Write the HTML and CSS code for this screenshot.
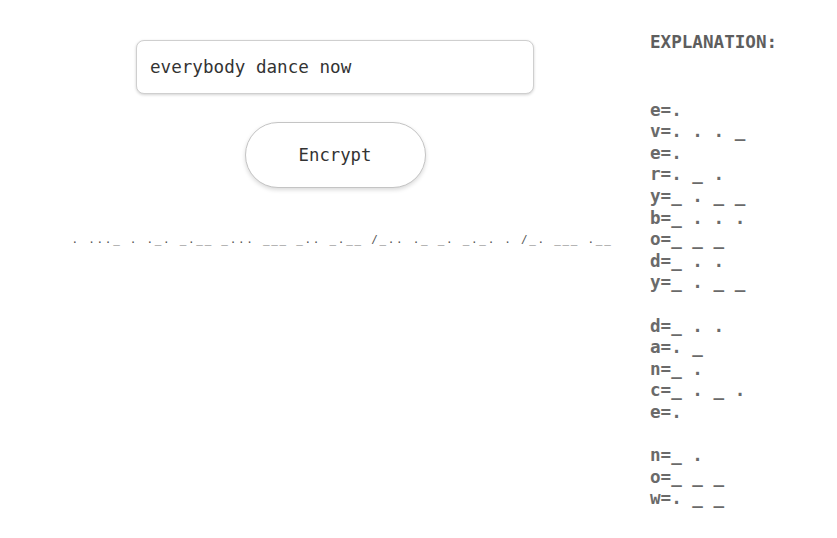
FILE: index.html
```html
<!DOCTYPE html>
<html lang="en">
<head>
<meta charset="utf-8">
<title>Morse Encrypt</title>
<link rel="stylesheet" href="styles.css">
</head>
<body>
<div class="page">
  <main class="main">
    <input class="text-input" type="text" value="everybody dance now">
    <button class="encrypt">Encrypt</button>
    <p class="morse">. ..._ . ._. _.__ _... ___ _.. _.__ /_.. ._ _. _._. . /_. ___ .__</p>
  </main>
  <aside class="explain">
    <h2 class="explain-title">EXPLANATION:</h2>
    <div class="word">
      <div class="row">e=.</div>
      <div class="row">v=. . . _</div>
      <div class="row">e=.</div>
      <div class="row">r=. _ .</div>
      <div class="row">y=_ . _ _</div>
      <div class="row">b=_ . . .</div>
      <div class="row">o=_ _ _</div>
      <div class="row">d=_ . .</div>
      <div class="row">y=_ . _ _</div>
    </div>
    <div class="word">
      <div class="row">d=_ . .</div>
      <div class="row">a=. _</div>
      <div class="row">n=_ .</div>
      <div class="row">c=_ . _ .</div>
      <div class="row">e=.</div>
    </div>
    <div class="word">
      <div class="row">n=_ .</div>
      <div class="row">o=_ _ _</div>
      <div class="row">w=. _ _</div>
    </div>
  </aside>
</div>
</body>
</html>
```

FILE: styles.css
```css
html, body {
  margin: 0;
  padding: 0;
  background: #ffffff;
}

body {
  font-family: "DejaVu Sans Mono", "Liberation Mono", monospace;
  color: #333333;
}

.page {
  display: flex;
  align-items: flex-start;
}

.main {
  width: 630px;
  padding: 40px 0 0 20px;
  display: flex;
  flex-direction: column;
  align-items: center;
}

.text-input {
  box-sizing: border-box;
  width: 398px;
  height: 54px;
  padding: 0 13px;
  border: 1px solid #cfcfcf;
  border-radius: 8px;
  box-shadow: 0 1px 3px rgba(0, 0, 0, 0.18);
  font-family: "DejaVu Sans Mono", "Liberation Mono", monospace;
  font-size: 17.6px;
  color: #333333;
  background: #ffffff;
  outline: none;
}

.encrypt {
  box-sizing: border-box;
  margin-top: 28px;
  width: 181px;
  height: 66px;
  border: 1px solid #c4c4c4;
  border-radius: 33px;
  background: #ffffff;
  box-shadow: 0 2px 4px rgba(0, 0, 0, 0.15);
  font-family: "DejaVu Sans Mono", "Liberation Mono", monospace;
  font-size: 17.3px;
  color: #333333;
  padding: 0;
}

.morse {
  margin: 45px 0 0 14px;
  font-size: 11px;
  line-height: 14px;
  letter-spacing: 1.7px;
  color: #555555;
  white-space: pre;
}

.explain {
  padding-top: 32px;
  color: #6a6a6a;
  font-size: 17.6px;
  line-height: 21.6px;
  font-weight: bold;
}

.explain-title {
  margin: 0 0 46px 0;
  font-size: 17.6px;
  line-height: 21.6px;
  font-weight: bold;
  color: #5e5e5e;
}

.word + .word {
  margin-top: 21.6px;
}

.row {
  white-space: pre;
}
```
